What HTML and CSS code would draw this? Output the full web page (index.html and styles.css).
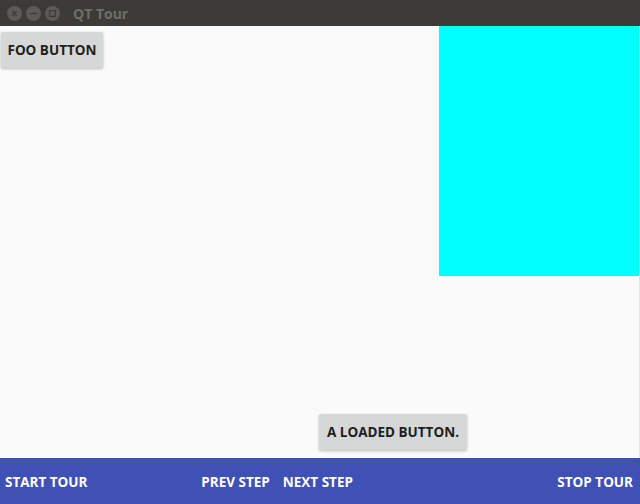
FILE: index.html
```html
<!DOCTYPE html>
<html>
<head>
<meta charset="utf-8">
<link rel="stylesheet" href="styles.css">
</head>
<body>
<div class="window">
  <div class="titlebar">
    <div class="controls">
      <span class="ctl"><svg width="15" height="15" viewBox="0 0 15 15"><circle cx="7.5" cy="7.5" r="7.5" fill="#5b5a56"/><path d="M5.3 5.3 L9.7 9.7 M9.7 5.3 L5.3 9.7" stroke="#3c3b37" stroke-width="1.3"/></svg></span>
      <span class="ctl"><svg width="15" height="15" viewBox="0 0 15 15"><circle cx="7.5" cy="7.5" r="7.5" fill="#5b5a56"/><path d="M3.8 7.5 H11.2" stroke="#3c3b37" stroke-width="1.3"/></svg></span>
      <span class="ctl"><svg width="15" height="15" viewBox="0 0 15 15"><circle cx="7.5" cy="7.5" r="7.5" fill="#5b5a56"/><rect x="4.6" y="4.6" width="5.8" height="5.8" fill="none" stroke="#3c3b37" stroke-width="1.2"/></svg></span>
    </div>
    <span class="title">QT Tour</span>
  </div>
  <div class="content">
    <div class="top-row">
      <button class="btn foo">FOO BUTTON</button>
      <div class="cyan"></div>
    </div>
    <div class="bottom-row">
      <button class="btn loaded">A LOADED BUTTON.</button>
    </div>
  </div>
  <div class="tourbar">
    <span class="tb start">START TOUR</span>
    <span class="spacer left"></span>
    <span class="tb prev">PREV STEP</span>
    <span class="tb next">NEXT STEP</span>
    <span class="spacer right"></span>
    <span class="tb stop">STOP TOUR</span>
  </div>
</div>
</body>
</html>
```
FILE: styles.css
```css
html, body {
  margin: 0;
  padding: 0;
  width: 640px;
  height: 504px;
  overflow: hidden;
  font-family: "Open Sans", "Noto Sans", sans-serif;
}
.window {
  width: 640px;
  height: 504px;
  display: flex;
  flex-direction: column;
  background: #fafafa;
}
.titlebar {
  height: 26px;
  background: #3c3b37;
  display: flex;
  align-items: center;
  flex-shrink: 0;
}
.controls {
  display: flex;
  gap: 4px;
  margin-left: 7px;
  margin-top: 1px;
}
.ctl { display: block; width: 15px; height: 15px; }
.ctl svg { display: block; }
.title {
  margin-left: 13px;
  color: #6f6e6a;
  font-weight: 700;
  font-size: 14px;
  font-family: "Open Sans", sans-serif;
}
.content {
  flex: 1;
  display: flex;
  flex-direction: column;
  justify-content: space-between;
  border-right: 1px solid #e2e2e2;
}
.top-row {
  display: flex;
  justify-content: space-between;
  align-items: flex-start;
}
.btn {
  border: none;
  background: #d6d7d7;
  border-radius: 2px;
  box-shadow: 0 1px 3px rgba(0,0,0,0.25);
  font-family: "Open Sans", sans-serif;
  font-weight: 700;
  font-size: 13.5px;
  color: #1e1e1e;
  height: 36px;
  padding: 0;
}
.foo {
  width: 102px;
  margin: 6px 0 0 1px;
}
.cyan {
  width: 200px;
  height: 250px;
  background: #00ffff;
}
.bottom-row {
  display: flex;
  padding-left: 319px;
  padding-bottom: 8px;
}
.loaded {
  width: 148px;
}
.tourbar {
  height: 46px;
  background: #3f51b5;
  display: flex;
  align-items: center;
  flex-shrink: 0;
  color: #fff;
  font-size: 13.5px;
  font-weight: 700;
  padding: 2px 7px 0 5px;
  box-sizing: border-box;
}
.tb { white-space: nowrap; }
.spacer.left { flex: 113 1 0; }
.spacer.right { flex: 203 1 0; }
.next { margin-left: 13px; }
```
